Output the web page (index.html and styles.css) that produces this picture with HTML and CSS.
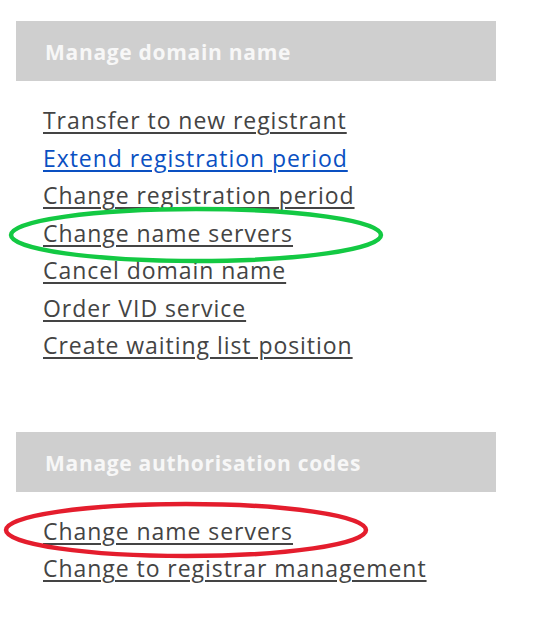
FILE: index.html
```html
<!DOCTYPE html>
<html lang="en">

<head>
    <meta charset="UTF-8">
    <meta name="viewport" content="width=device-width, initial-scale=1.0">
    <title>Manage domain name</title>
    <link rel="stylesheet" href="styles.css">
</head>

<body>
    <div class="panel">
        <section class="block">
            <h2 class="block-title">Manage domain name</h2>
            <ul class="links">
                <li><a href="#">Transfer to new registrant</a></li>
                <li><a href="#" class="visited">Extend registration period</a></li>
                <li><a href="#">Change registration period</a></li>
                <li><a href="#">Change name servers</a></li>
                <li><a href="#">Cancel domain name</a></li>
                <li><a href="#">Order VID service</a></li>
                <li><a href="#">Create waiting list position</a></li>
            </ul>
        </section>

        <section class="block">
            <h2 class="block-title">Manage authorisation codes</h2>
            <ul class="links">
                <li><a href="#">Change name servers</a></li>
                <li><a href="#">Change to registrar management</a></li>
            </ul>
        </section>

        <!-- hand-drawn markings over the screenshot -->
        <svg class="marks" width="540" height="628" viewBox="0 0 540 628">
            <ellipse cx="196" cy="235" rx="185" ry="26" fill="none" stroke="#13c943" stroke-width="4.5" />
            <ellipse cx="186" cy="530" rx="180" ry="26" fill="none" stroke="#e41d2d" stroke-width="4.5" />
        </svg>
    </div>
</body>

</html>
```

FILE: styles.css
```css
body {
    margin: 0;
    background-color: #fff;
    font-family: "Open Sans", Lato, sans-serif;
}

.panel {
    position: relative;
    padding: 21px 16px 0;
}

.block {
    width: 480px;
    margin-bottom: 67px;
}

.block-title {
    margin: 0;
    height: 60px;
    box-sizing: border-box;
    display: flex;
    align-items: center;
    padding: 2px 0 0 29px;
    background-color: #cfcfcf;
    color: #f7f7f7;
    font-size: 21px;
    font-weight: 700;
    letter-spacing: 0.7px;
}

.links {
    list-style: none;
    margin: 21px 0 0;
    padding: 0 0 0 27px;
    font-size: 23px;
    line-height: 37.5px;
}

.links a {
    color: #444;
    text-decoration: underline;
    text-decoration-thickness: 2px;
    text-underline-offset: 3px;
    letter-spacing: 0.95px;
}

.links a.visited {
    color: #0a50c2;
}

.marks {
    position: absolute;
    top: 0;
    left: 0;
    pointer-events: none;
}
```
